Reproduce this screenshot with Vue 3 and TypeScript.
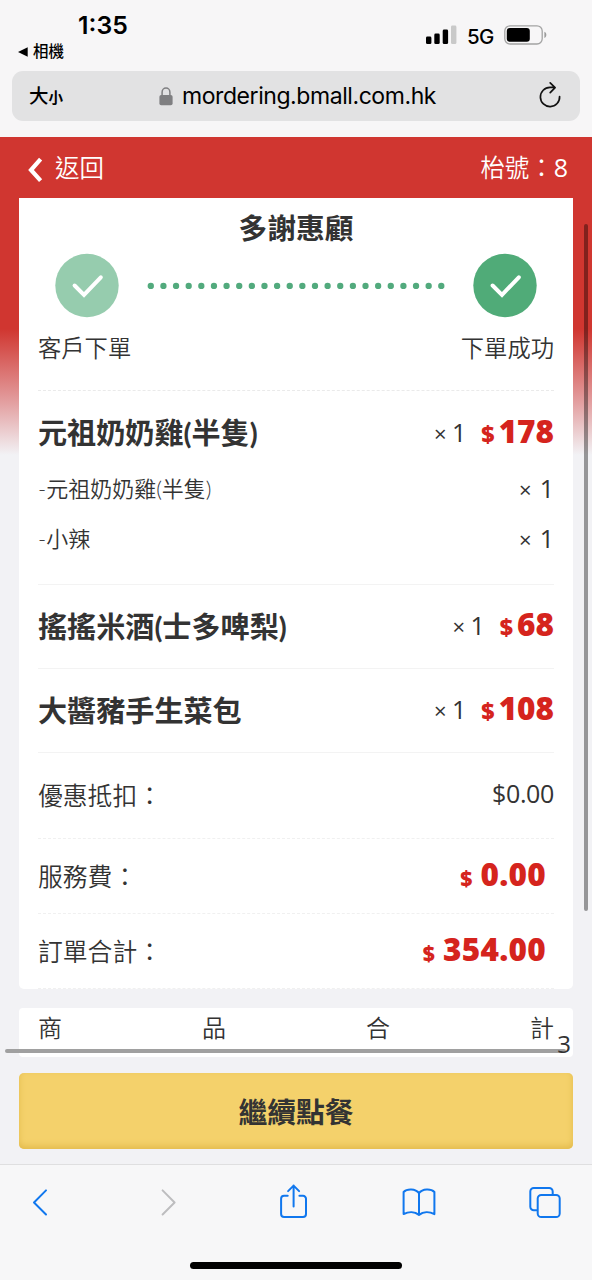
<script setup lang="ts">
interface Extra {
  name: string
  qty: number
}
interface Item {
  name: string
  qty: number
  price: string
  extras: Extra[]
}
interface Fee {
  label: string
  amount: string
}

const items: Item[] = [
  {
    name: '元祖奶奶雞(半隻)',
    qty: 1,
    price: '178',
    extras: [
      { name: '-元祖奶奶雞(半隻)', qty: 1 },
      { name: '-小辣', qty: 1 },
    ],
  },
  { name: '搖搖米酒(士多啤梨)', qty: 1, price: '68', extras: [] },
  { name: '大醬豬手生菜包', qty: 1, price: '108', extras: [] },
]

const fees: Fee[] = [
  { label: '服務費：', amount: '0.00' },
  { label: '訂單合計：', amount: '354.00' },
]

const summary: string[] = ['商', '品', '合', '計']
const dots: number[] = Array.from({ length: 24 }, (_, i) => 3.8 + i * 12.63)
</script>

<template>
  <div class="phone">
    <header class="browser-top">
      <div class="status">
        <div class="status-left">
          <div class="time">1:35</div>
          <div class="back-app">
            <svg width="10" height="10" viewBox="0 0 10 10"><path d="M0 5 9.7.3v9.4z" /></svg>
            <span>相機</span>
          </div>
        </div>
        <div class="status-right">
          <svg class="signal" width="31" height="19" viewBox="0 0 31 19">
            <rect x="0" y="11.500" width="5.400" height="7.600" rx="1.400" />
            <rect x="8.300" y="8.500" width="5.400" height="10.600" rx="1.400" />
            <rect x="16.700" y="4.500" width="5.400" height="14.600" rx="1.400" />
            <rect x="25" y=".500" width="5.400" height="18.600" rx="1.400" fill="#c9c9c9" />
          </svg>
          <span class="network">5G</span>
          <svg class="battery" width="43" height="20" viewBox="0 0 43 20">
            <rect x=".8" y=".8" width="37.4" height="18.2" rx="5.2" fill="none" stroke="#a3a3a3" stroke-width="1.3" />
            <rect x="2.8" y="3" width="23" height="13.8" rx="3" />
            <path d="M40.4 6.8c2.6 1 2.6 5.2 0 6.2z" fill="#9c9c9c" />
          </svg>
        </div>
      </div>
      <div class="address">
        <span class="text-size">大<small>小</small></span>
        <div class="url">
          <svg width="14" height="19" viewBox="0 0 14 19">
            <path d="M3.1 9V5.2a3.9 4.2 0 0 1 7.8 0V9" fill="none" stroke="#7f7f81" stroke-width="1.5" />
            <rect x=".4" y="8" width="13.2" height="10.2" rx="1.8" fill="#7f7f81" />
          </svg>
          <span>mordering.bmall.com.hk</span>
        </div>
        <svg class="reload" width="22" height="26" viewBox="0 0 22 26">
          <path d="M20.600 14.500A9.600 9.600 0 1 1 11 5.400h4.800M11.200.900l4.900 4.700-4.900 5" fill="none" stroke="#111" stroke-width="1.7" stroke-linecap="round" stroke-linejoin="round" />
        </svg>
      </div>
    </header>

    <main class="page">
      <nav class="nav">
        <svg width="15" height="26" viewBox="0 0 15 26"><path d="M12.6 2.2 3 13l9.6 10.6" fill="none" stroke="#fff" stroke-width="4.2" /></svg>
        <span class="nav-back">返回</span>
        <span class="table-no">枱號：<b>8</b></span>
      </nav>

      <section class="card order">
        <h1>多謝惠顧</h1>
        <div class="progress">
          <svg class="step" width="64" height="64" viewBox="0 0 64 64">
            <circle cx="32" cy="31.500" r="31.700" fill="#96ccae" />
            <path d="M19.600 31.500 29 40.800 45.800 23.300" />
          </svg>
          <svg width="298" height="8" viewBox="0 0 298 8">
            <circle v-for="x in dots" :key="x" :cx="x" cy="3.900" r="3.150" fill="#52aa7d" />
          </svg>
          <svg class="step" width="64" height="64" viewBox="0 0 64 64">
            <circle cx="32" cy="31.500" r="31.700" fill="#50ab78" />
            <path d="M19.600 31.500 29 40.800 45.800 23.300" />
          </svg>
        </div>
        <div class="labels"><span>客戶下單</span><span>下單成功</span></div>

        <article v-for="item in items" :key="item.name" class="item">
          <div class="item-main">
            <h2>{{ item.name }}</h2>
            <span class="qty"><i>×</i> {{ item.qty }}</span>
            <span class="price"><small>$</small>{{ item.price }}</span>
          </div>
          <div v-for="extra in item.extras" :key="extra.name" class="extra">
            <span>{{ extra.name }}</span>
            <span class="extra-qty"><i>×</i>{{ extra.qty }}</span>
          </div>
        </article>

        <div class="fee discount"><span>優惠抵扣：</span><span class="plain">$0.00</span></div>
        <div v-for="fee in fees" :key="fee.label" class="fee">
          <span>{{ fee.label }}</span>
          <span class="amount"><small>$</small>{{ fee.amount }}</span>
        </div>
      </section>

      <section class="card summary">
        <span v-for="c in summary" :key="c">{{ c }}</span>
        <div class="h-scroll"></div>
        <span class="count">3</span>
      </section>

      <button class="continue">繼續點餐</button>
      <div class="v-scroll"></div>
    </main>

    <footer class="toolbar">
      <div class="tools">
        <svg width="36" height="36" viewBox="0 0 36 36"><path d="M24 6.400 12 18.500l12 12" /></svg>
        <svg class="off" width="36" height="36" viewBox="0 0 36 36"><path d="M14.600 6.400l12 12.100-12 12" /></svg>
        <svg width="36" height="36" viewBox="0 0 36 36">
          <path d="M12.700 11.800H9.100a3 3 0 0 0-3 3v15.200a3 3 0 0 0 3 3h18.900a3 3 0 0 0 3-3V14.800a3 3 0 0 0-3-3H24.400M18.600 22.600V1.600M13.100 7.100l5.500-5.500 5.500 5.500" />
        </svg>
        <svg width="36" height="36" viewBox="0 0 36 36">
          <path d="M18 9.100C14.500 4.500 6 4.400 2.600 8v22.100c5-2.500 11.200-2.500 15.400.8 4.200-3.300 10.400-3.300 15.400-.8V8C30 4.400 21.500 4.500 18 9.100zV30.600" />
        </svg>
        <svg width="36" height="36" viewBox="0 0 36 36">
          <path d="M9.500 26.300H6.800a3.500 3.500 0 0 1-3.500-3.500V7.500A3.500 3.500 0 0 1 6.800 4h15.400a3.500 3.500 0 0 1 3.500 3.500v3" />
          <rect x="10.700" y="11" width="22" height="22" rx="3.600" />
        </svg>
      </div>
      <div class="home"></div>
    </footer>
  </div>
</template>

<style>
body {
  background: #f6f6f7;
}
</style>

<style scoped>
* {
  box-sizing: border-box;
}
.phone {
  width: 592px;
  height: 1280px;
  overflow: hidden;
  display: flex;
  flex-direction: column;
  background: #f7f6f7;
  color: #333;
  font-family: "Noto Sans CJK TC", sans-serif;
}
svg {
  display: block;
  flex: none;
  overflow: visible;
}
.browser-top {
  height: 137px;
  color: #000;
  font-family: Inter, "Noto Sans CJK TC", sans-serif;
}
.status {
  height: 71px;
  display: flex;
  justify-content: space-between;
}
.time {
  padding: 11px 0 0 78px;
  font-size: 24.800px;
  line-height: 29px;
  font-weight: 600;
}
.back-app {
  display: flex;
  align-items: center;
  gap: 5px;
  padding-left: 18px;
  height: 23px;
  font-size: 15.500px;
  line-height: 23px;
  font-weight: 500;
}
.status-right {
  display: flex;
  align-items: flex-start;
  padding: 25px 45px 0 0;
}
.network {
  width: 27px;
  margin: -1px 10px 0 10px;
  font-size: 20.500px;
  line-height: 25px;
  letter-spacing: -0.600px;
  font-weight: 500;
}
.address {
  height: 50px;
  margin: 0 12px;
  padding: 0 19px 0 17px;
  border-radius: 11px;
  background: #e2e2e3;
  display: flex;
  align-items: center;
  justify-content: space-between;
}
.text-size {
  font-size: 19.500px;
  line-height: 26px;
  font-weight: 500;
  width: 130px;
  padding-top: 2px;
}
.text-size small {
  font-size: 14.500px;
  font-weight: 700;
}
.url {
  display: flex;
  align-items: center;
  gap: 9px;
  width: 380px;
  font-size: 23px;
  letter-spacing: -0.430px;
  white-space: nowrap;
}
.reload {
  margin-top: -3px;
}
.page {
  position: relative;
  height: 1027px;
  padding: 0 19px;
  background: linear-gradient(#d03630 0, #d03630 192px, #e29a9b 262px, #f2f2f5 318px);
}
.nav {
  height: 61px;
  display: flex;
  align-items: center;
  padding: 0 5px 0 8px;
  color: #fff;
  font-size: 24.500px;
  font-weight: 350;
}
.nav svg {
  margin: 5px 12px 0 1px;
}
.nav span {
  line-height: 58px;
}
.nav-back {
  padding-bottom: 2px;
}
.table-no {
  margin-left: auto;
  padding-bottom: 1px;
}
.table-no b {
  font-family: "Open Sans", sans-serif;
  font-weight: 400;
  font-size: 25px;
}
.card {
  background: #fff;
}
.order {
  height: 791px;
  padding: 0 19px;
  border-radius: 0 0 5px 5px;
}
h1,
h2 {
  margin: 0;
  font-weight: 700;
  color: #333;
}
h1 {
  height: 56px;
  line-height: 57px;
  text-align: center;
  font-size: 28.800px;
}
.progress {
  display: flex;
  align-items: center;
  justify-content: space-between;
  padding: 0 17px;
  height: 63px;
}
.step path {
  fill: none;
  stroke: #fff;
  stroke-width: 4;
  stroke-linecap: round;
}
.labels {
  height: 74px;
  display: flex;
  justify-content: space-between;
  font-size: 23.300px;
  line-height: 61px;
  font-weight: 350;
  border-bottom: 1px dashed #eaeaea;
}
.item {
  border-bottom: 1px solid #f3f3f3;
}
.item:has(.extra) {
  padding-bottom: 20px;
}
.item-main {
  height: 83px;
  display: flex;
  align-items: center;
}
.item:has(.extra) .item-main {
  height: 73px;
  padding-top: 11px;
}
h2 {
  flex: 1;
  font-family: Lato, "Noto Sans CJK TC", sans-serif;
  font-size: 29.100px;
  line-height: 40px;
}
i {
  font-style: normal;
  font-size: 22px;
}
.qty,
.price,
.extra-qty,
.plain,
.amount,
.count {
  font-family: "Open Sans", sans-serif;
}
.qty {
  font-size: 25px;
  line-height: 40px;
  font-weight: 400;
  margin-right: 15px;
  padding-bottom: 2px;
  word-spacing: -1px;
}
.price {
  color: #d5241d;
  font-size: 31.500px;
  line-height: 40px;
  font-weight: 800;
  padding-bottom: 2px;
}
.price small {
  font-size: 23px;
  margin-right: 4px;
}
.extra {
  height: 50px;
  line-height: 50px;
  display: flex;
  justify-content: space-between;
  font-family: Lato, "Noto Sans CJK TC", sans-serif;
  font-size: 22px;
  font-weight: 350;
}
.extra-qty {
  font-size: 25px;
  line-height: 48px;
  font-weight: 400;
}
.extra-qty i {
  margin-right: 8px;
}
.fee {
  height: 75px;
  line-height: 72px;
  display: flex;
  justify-content: space-between;
  font-size: 24.800px;
  font-weight: 350;
  border-bottom: 1px dashed #f0f0f0;
}
.discount {
  height: 86px;
  line-height: 82px;
}
.plain {
  font-size: 25px;
  line-height: 81px;
  letter-spacing: -0.350px;
  font-weight: 400;
}
.amount {
  padding-right: 8px;
  color: #d5241d;
  font-size: 31.500px;
  line-height: 70px;
  font-weight: 800;
  letter-spacing: 0.250px;
}
.amount small {
  font-size: 21px;
  margin-right: 8px;
}
.summary {
  position: relative;
  margin-top: 19px;
  height: 49px;
  padding: 0 19px;
  border-radius: 4px;
  display: flex;
  justify-content: space-between;
  font-size: 24px;
  line-height: 37px;
  font-weight: 350;
}
.h-scroll {
  position: absolute;
  left: -14px;
  right: 7px;
  top: 41px;
  height: 4px;
  border-radius: 2px;
  background: #a0a0a0;
}
.count {
  position: absolute;
  right: 2px;
  top: 17px;
  font-weight: 400;
}
.continue {
  display: block;
  width: 554px;
  height: 76px;
  margin: 16px 0 0;
  padding: 0 0 2px;
  border: 0;
  border-radius: 5px;
  background: #f4d16b;
  box-shadow: inset 0 -3px 6px #e3bb4d;
  color: #333;
  font: 700 28.800px "Noto Sans CJK TC", sans-serif;
}
.v-scroll {
  position: absolute;
  top: 87px;
  right: 4px;
  width: 4px;
  height: 687px;
  border-radius: 2px;
  background: rgba(0, 0, 0, 0.38);
}
.toolbar {
  height: 116px;
  border-top: 1px solid #dfdfe0;
  background: #f7f7f8;
}
.tools {
  display: flex;
  justify-content: space-between;
  padding: 19px 29px 0 22px;
}
.tools svg {
  fill: none;
  stroke: #1077ee;
  stroke-width: 2;
  stroke-linecap: round;
  stroke-linejoin: round;
}
.tools .off {
  stroke: #bdbdbf;
}
.home {
  width: 212px;
  height: 7px;
  margin: 42px 0 0 190px;
  border-radius: 4px;
  background: #000;
}
</style>
